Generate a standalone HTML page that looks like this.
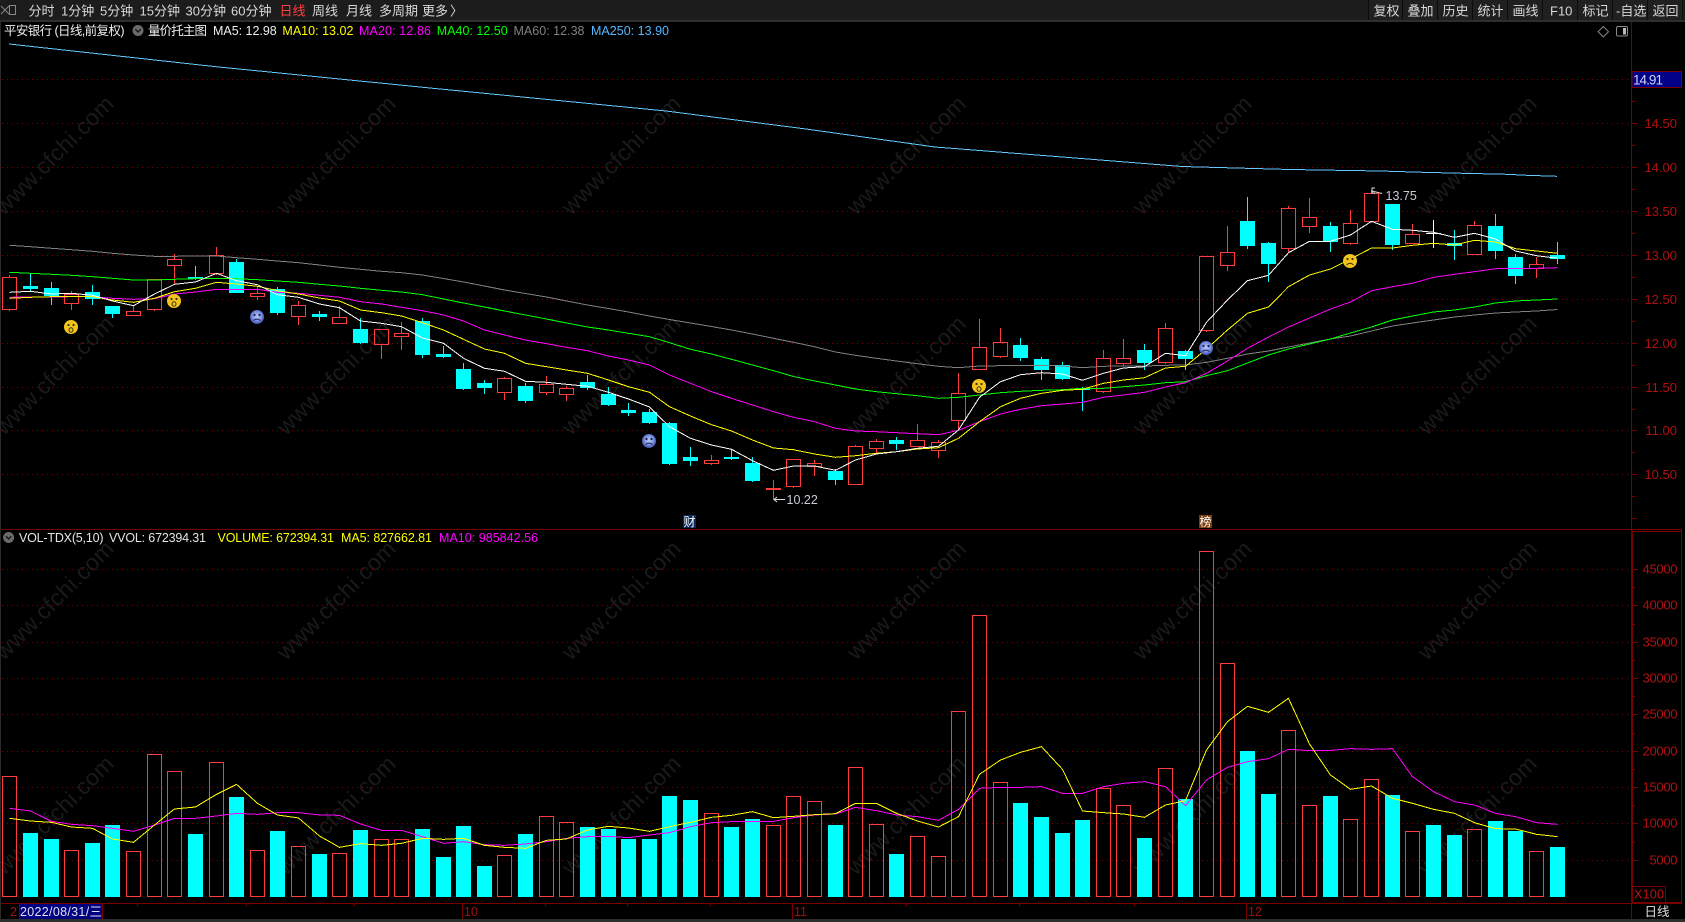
<!DOCTYPE html>
<html lang="zh-CN">
<head>
<meta charset="utf-8">
<title>平安银行 日线</title>
<style>
html,body{margin:0;padding:0;background:#000;width:1685px;height:922px;overflow:hidden}
svg{display:block}
text{font-family:"Liberation Sans","Noto Sans CJK SC",sans-serif}
.tb{font-size:13px;fill:#d8d8d8}
.ax{font-size:13px;fill:#b01010;text-anchor:end}
.wm{font-size:23px;fill:#1a1a1a;text-anchor:middle}
.info{font-size:12.5px}
.grid line{stroke:#8a0000;stroke-width:1;stroke-dasharray:1 4}
.ln{fill:none;stroke-width:1;shape-rendering:crispEdges}
.v{fill:none;stroke-width:1;vector-effect:non-scaling-stroke;shape-rendering:crispEdges}
</style>
</head>
<body>
<svg width="1685" height="922" viewBox="0 0 1685 922" xmlns="http://www.w3.org/2000/svg">
<defs>
<radialGradient id="bg" cx="50%" cy="45%" r="55%"><stop offset="0" stop-color="#b8c8f8"/><stop offset=".6" stop-color="#7a90e0"/><stop offset="1" stop-color="#3a4ea8"/></radialGradient>
<g id="ys"><circle r="7" fill="#f2c41c"/><circle cx="-2.5" cy="-2" r="1.1" fill="#3a3010"/><circle cx="2.5" cy="-2" r="1.1" fill="#3a3010"/><ellipse cy="3" rx="2" ry="2.2" fill="none" stroke="#3a3010"/></g>
<g id="yf"><circle r="7" fill="#f2c41c"/><circle cx="-2.5" cy="-2" r="1.1" fill="#3a3010"/><circle cx="2.5" cy="-2" r="1.1" fill="#3a3010"/><path d="M-3.5 4Q0 .5 3.5 4" fill="none" stroke="#3a3010"/></g>
<g id="bf"><circle r="7" fill="url(#bg)"/><circle cx="-2.5" cy="-2" r="1.1" fill="#1a2040"/><circle cx="2.5" cy="-2" r="1.1" fill="#1a2040"/><path d="M-3.5 3.5Q0 .8 3.5 3.5" fill="none" stroke="#1a2040"/></g>
</defs>

<rect width="1685" height="922" fill="#000"/>

<!-- watermark -->
<g class="wm">
<text transform="translate(54 155) rotate(-45)" dy="8" textLength="157">www.cfchi.com</text>
<text transform="translate(336 155) rotate(-45)" dy="8" textLength="157">www.cfchi.com</text>
<text transform="translate(621 155) rotate(-45)" dy="8" textLength="157">www.cfchi.com</text>
<text transform="translate(906 155) rotate(-45)" dy="8" textLength="157">www.cfchi.com</text>
<text transform="translate(1192 155) rotate(-45)" dy="8" textLength="157">www.cfchi.com</text>
<text transform="translate(1477 155) rotate(-45)" dy="8" textLength="157">www.cfchi.com</text>
<text transform="translate(54 375) rotate(-45)" dy="8" textLength="157">www.cfchi.com</text>
<text transform="translate(336 375) rotate(-45)" dy="8" textLength="157">www.cfchi.com</text>
<text transform="translate(621 375) rotate(-45)" dy="8" textLength="157">www.cfchi.com</text>
<text transform="translate(906 375) rotate(-45)" dy="8" textLength="157">www.cfchi.com</text>
<text transform="translate(1192 375) rotate(-45)" dy="8" textLength="157">www.cfchi.com</text>
<text transform="translate(1477 375) rotate(-45)" dy="8" textLength="157">www.cfchi.com</text>
<text transform="translate(54 600) rotate(-45)" dy="8" textLength="157">www.cfchi.com</text>
<text transform="translate(336 600) rotate(-45)" dy="8" textLength="157">www.cfchi.com</text>
<text transform="translate(621 600) rotate(-45)" dy="8" textLength="157">www.cfchi.com</text>
<text transform="translate(906 600) rotate(-45)" dy="8" textLength="157">www.cfchi.com</text>
<text transform="translate(1192 600) rotate(-45)" dy="8" textLength="157">www.cfchi.com</text>
<text transform="translate(1477 600) rotate(-45)" dy="8" textLength="157">www.cfchi.com</text>
<text transform="translate(54 815) rotate(-45)" dy="8" textLength="157">www.cfchi.com</text>
<text transform="translate(336 815) rotate(-45)" dy="8" textLength="157">www.cfchi.com</text>
<text transform="translate(621 815) rotate(-45)" dy="8" textLength="157">www.cfchi.com</text>
<text transform="translate(906 815) rotate(-45)" dy="8" textLength="157">www.cfchi.com</text>
<text transform="translate(1192 815) rotate(-45)" dy="8" textLength="157">www.cfchi.com</text>
<text transform="translate(1477 815) rotate(-45)" dy="8" textLength="157">www.cfchi.com</text>
</g>

<!-- grids -->
<g class="grid" shape-rendering="crispEdges">
<line x1="2" x2="1631" y1="79.5" y2="79.5"/>
<line x1="2" x2="1631" y1="123.5" y2="123.5"/>
<line x1="2" x2="1631" y1="167.5" y2="167.5"/>
<line x1="2" x2="1631" y1="211.5" y2="211.5"/>
<line x1="2" x2="1631" y1="255.5" y2="255.5"/>
<line x1="2" x2="1631" y1="299.5" y2="299.5"/>
<line x1="2" x2="1631" y1="343.5" y2="343.5"/>
<line x1="2" x2="1631" y1="387.5" y2="387.5"/>
<line x1="2" x2="1631" y1="430.5" y2="430.5"/>
<line x1="2" x2="1631" y1="474.5" y2="474.5"/>
<line x1="2" x2="1631" y1="569.5" y2="569.5"/>
<line x1="2" x2="1631" y1="605.5" y2="605.5"/>
<line x1="2" x2="1631" y1="642.5" y2="642.5"/>
<line x1="2" x2="1631" y1="678.5" y2="678.5"/>
<line x1="2" x2="1631" y1="714.5" y2="714.5"/>
<line x1="2" x2="1631" y1="751.5" y2="751.5"/>
<line x1="2" x2="1631" y1="787.5" y2="787.5"/>
<line x1="2" x2="1631" y1="823.5" y2="823.5"/>
<line x1="2" x2="1631" y1="860.5" y2="860.5"/>
</g>

<!-- candles red -->
<path shape-rendering="crispEdges" fill="none" stroke="#ff3c3c" d="
M2.5 277.5h14v32h-14zM9.5 275v2M9.5 310v1
M64.5 294.5h14v9h-14zM71.5 291v3M71.5 304v6
M126.5 311.5h14v4h-14zM133.5 306v5
M147.5 279.5h14v30h-14zM154.5 310v1
M167.5 259.5h14v6h-14zM174.5 254v5M174.5 266v18
M209.5 255.5h14v18h-14zM216.5 247v8M216.5 274v1
M250.5 293.5h14v3h-14zM257.5 286v7M257.5 297v3
M291.5 305.5h14v11h-14zM298.5 301v4M298.5 317v8
M332.5 317.5h14v6h-14zM339.5 306v11
M374.5 329.5h14v15h-14zM381.5 345v14
M394.5 333.5h14v3h-14zM401.5 322v11M401.5 337v13
M497.5 378.5h14v14h-14zM504.5 377v1M504.5 393v7
M539.5 384.5h14v8h-14zM546.5 376v8M546.5 393v2
M559.5 388.5h14v6h-14zM566.5 386v2M566.5 395v6
M704.5 460.5h14v3h-14zM711.5 455v5M711.5 464v1
M773.5 480V500
M786.5 459.5h14v27h-14zM793.5 487v1
M807.5 463.5h14v3h-14zM814.5 460v3M814.5 467v9
M848.5 446.5h14v38h-14zM855.5 445v1
M869.5 441.5h14v7h-14zM876.5 439v2M876.5 449v5
M910.5 440.5h14v6h-14zM917.5 424v16
M931.5 442.5h14v8h-14zM938.5 440v2M938.5 451v7
M951.5 393.5h14v27h-14zM958.5 373v20M958.5 421v9
M972.5 347.5h14v22h-14zM979.5 319v28
M993.5 342.5h14v14h-14zM1000.5 328v14M1000.5 357v1
M1096.5 358.5h14v33h-14zM1103.5 350v8M1103.5 392v1
M1116.5 358.5h14v5h-14zM1123.5 339v19M1123.5 364v2
M1158.5 328.5h14v34h-14zM1165.5 323v5M1165.5 363v1
M1199.5 256.5h14v74h-14zM1206.5 331v1
M1220.5 252.5h14v13h-14zM1227.5 226v26M1227.5 266v5
M1281.5 208.5h14v40h-14zM1288.5 206v2M1288.5 249v4
M1302.5 217.5h14v9h-14zM1309.5 198v19M1309.5 227v6
M1343.5 223.5h14v20h-14zM1350.5 210v13M1350.5 244v1
M1364.5 193.5h14v28h-14zM1371.5 190v3M1371.5 222v1
M1405.5 234.5h14v9h-14zM1412.5 224v10
M1467.5 225.5h14v29h-14zM1474.5 221v4
M1529.5 264.5h14v4h-14zM1536.5 257v7M1536.5 269v9"/>
<rect x="766" y="488" width="15" height="2" fill="#ff3c3c"/>

<!-- candles cyan -->
<path shape-rendering="crispEdges" fill="#0ff" d="
M23 286h15v3h-15zM44 288h15v8h-15zM85 292h15v7h-15zM105 306h15v8h-15zM188 277h15v2h-15zM229 262h15v31h-15zM270 289h15v24h-15zM312 314h15v3h-15zM353 329h15v14h-15zM415 321h15v34h-15zM436 354h15v3h-15zM456 369h15v20h-15zM477 383h15v5h-15zM518 386h15v15h-15zM580 382h15v6h-15zM601 394h15v11h-15zM621 410h15v3h-15zM642 412h15v11h-15zM662 423h15v41h-15zM683 457h15v4h-15zM724 457h15v2h-15zM745 463h15v18h-15zM828 471h15v9h-15zM889 440h15v4h-15zM1013 345h15v13h-15zM1034 359h15v11h-15zM1055 365h15v14h-15zM1075 388h15v2h-15zM1137 350h15v13h-15zM1178 351h15v8h-15zM1240 221h15v25h-15zM1261 243h15v21h-15zM1323 226h15v16h-15zM1385 204h15v41h-15zM1447 243h15v3h-15zM1488 226h15v25h-15zM1508 257h15v19h-15zM1550 255h15v4h-15z"/>
<path shape-rendering="crispEdges" fill="none" stroke="#0ff" d="
M30.5 274V291M51.5 282V305M92.5 285V305M112.5 306V318M195.5 266V280M236.5 259V293M277.5 287V315M319.5 311V321M360.5 318V344M422.5 318V358M443.5 346V358M463.5 363V390M484.5 380V394M525.5 383V403M587.5 375V390M608.5 387V406M628.5 403V416M649.5 409V424M669.5 422V465M690.5 447V466M731.5 450V460M752.5 457V482M835.5 469V485M896.5 437V450M1020.5 338V361M1041.5 357V380M1062.5 362V380M1082.5 387V411M1144.5 344V370M1185.5 350V370M1247.5 197V249M1268.5 242V282M1330.5 222V252M1392.5 204V250M1454.5 230V260M1495.5 214V259M1515.5 254V284M1557.5 242V264"/>
<path shape-rendering="crispEdges" fill="none" stroke="#fff" d="M1426 233.5H1441M1433.5 220V248"/>

<!-- price MAs -->
<polyline class="ln" stroke="#64c8ff" points="9,44 215,66.6 430,88 666,111 806,129 935,147 1075,158 1182,166.5 1290,169.5 1380,171 1423,172.3 1463,173.3 1507,174.3 1527,175.3 1557,176.3"/>
<polyline class="ln" stroke="#808080" points="9.5,245.3 30.5,246.7 51.5,248.3 71.5,249.7 92.5,251.3 112.5,253.3 133.5,255 154.5,256.3 174.5,256.3 195.5,256 216.5,256 236.5,257.7 257.5,259.3 277.5,261 298.5,262.7 319.5,265 339.5,267.3 360.5,269.3 381.5,271.3 401.5,272.7 422.5,275 443.5,278.5 463.5,282 484.5,286 504.5,290 525.5,293.5 546.5,297 566.5,301 587.5,305 608.5,308.5 628.5,312 649.5,316 669.5,319.5 690.5,323 711.5,326.5 731.5,330 752.5,334 773.5,338.3 793.5,342.3 814.5,346.7 835.5,352 855.5,355.3 876.5,358.3 896.5,361 917.5,363.7 938.5,366.3 958.5,367.7 979.5,366 1000.5,365.7 1020.5,365.3 1041.5,365.3 1062.5,366 1082.5,367.7 1103.5,366.3 1123.5,366 1144.5,366 1165.5,365.3 1185.5,365 1206.5,362.3 1227.5,358.3 1247.5,354 1268.5,351 1288.5,347 1309.5,343 1330.5,339 1350.5,336 1371.5,331 1392.5,326 1412.5,323 1433.5,320 1454.5,317 1474.5,315 1495.5,313 1515.5,312 1536.5,311 1557.5,309.5"/>
<polyline class="ln" stroke="#0f0" points="9.5,272.3 30.5,273.3 51.5,274.3 71.5,275.3 92.5,276.7 112.5,278.3 133.5,280 154.5,280 174.5,279.3 195.5,278.7 216.5,278.3 236.5,278.7 257.5,279.7 277.5,281 298.5,282.3 319.5,284.3 339.5,286 360.5,288.3 381.5,290.3 401.5,292 422.5,294.7 443.5,299 463.5,303 484.5,307 504.5,311 525.5,315 546.5,319 566.5,323 587.5,327 608.5,330 628.5,333.3 649.5,336.7 669.5,342.7 690.5,349.3 711.5,354 731.5,359.3 752.5,365 773.5,370.7 793.5,376.5 814.5,381 835.5,385 855.5,389 876.5,391.7 896.5,393.7 917.5,395.7 938.5,398.3 958.5,397.3 979.5,395 1000.5,392.7 1020.5,391.3 1041.5,390.3 1062.5,389.7 1082.5,388.3 1103.5,388.3 1123.5,386.7 1144.5,385 1165.5,382.7 1185.5,381.7 1206.5,375.7 1227.5,370.7 1247.5,363 1268.5,355 1288.5,349 1309.5,344 1330.5,339 1350.5,333 1371.5,327 1392.5,320 1412.5,316 1433.5,312 1454.5,310 1474.5,307 1495.5,303 1515.5,301 1536.5,300 1557.5,299"/>
<polyline class="ln" stroke="#f0f" points="9.5,297.3 30.5,297 51.5,297 71.5,296.7 92.5,296.7 112.5,298.3 133.5,299.3 154.5,298.7 174.5,294 195.5,292 216.5,289.3 236.5,289.3 257.5,289.3 277.5,292.3 298.5,293.3 319.5,295.3 339.5,297.3 360.5,301.7 381.5,304 401.5,307.3 422.5,310.7 443.5,315 463.5,321 484.5,330 504.5,335 525.5,340 546.5,343.7 566.5,347.3 587.5,350.7 608.5,356 628.5,360 649.5,365 669.5,375 690.5,383.3 711.5,391.7 731.5,398.3 752.5,405 773.5,411.7 793.5,417.3 814.5,421.7 835.5,428.3 855.5,431 876.5,431.7 896.5,432.7 917.5,433.7 938.5,434.7 958.5,430.3 979.5,421.7 1000.5,414 1020.5,409.3 1041.5,405.7 1062.5,404 1082.5,402.3 1103.5,397.3 1123.5,395 1144.5,392.3 1165.5,387 1185.5,382.7 1206.5,373.3 1227.5,361 1247.5,348.3 1268.5,337 1288.5,327 1309.5,318 1330.5,309 1350.5,302 1371.5,290.7 1392.5,286.7 1412.5,283.3 1433.5,277.3 1454.5,274.3 1474.5,271.7 1495.5,268.7 1515.5,268.3 1536.5,268.3 1557.5,267.7"/>
<polyline class="ln" stroke="#ff0" points="9.5,298.3 30.5,297.3 51.5,296.7 71.5,296.3 92.5,296.7 112.5,300 133.5,302.3 154.5,298.3 174.5,291.7 195.5,288.3 216.5,282.3 236.5,284 257.5,286.3 277.5,290.7 298.5,294 319.5,298 339.5,301 360.5,310 381.5,312.7 401.5,316 422.5,322.7 443.5,330 463.5,339.3 484.5,349 504.5,353.3 525.5,363.3 546.5,366.7 566.5,370 587.5,373.3 608.5,380 628.5,386.7 649.5,392.3 669.5,406.7 690.5,416 711.5,424.7 731.5,431 752.5,440 773.5,448 793.5,449.7 814.5,454 835.5,457.3 855.5,455.7 876.5,453.3 896.5,451.7 917.5,449 938.5,447.7 958.5,438.3 979.5,421.7 1000.5,406.7 1020.5,398.3 1041.5,393.3 1062.5,390.3 1082.5,389.3 1103.5,383.3 1123.5,380 1144.5,377.7 1165.5,368 1185.5,366.3 1206.5,349 1227.5,330 1247.5,313.3 1268.5,307 1288.5,286.7 1309.5,275 1330.5,269 1350.5,259 1371.5,248 1392.5,248 1412.5,245.3 1433.5,243.3 1454.5,245 1474.5,240.3 1495.5,242 1515.5,248.7 1536.5,251 1557.5,253.3"/>
<polyline class="ln" stroke="#fff" points="9.5,292.3 30.5,291.3 51.5,294 71.5,293.3 92.5,295.3 112.5,301 133.5,305.7 154.5,294 174.5,284.3 195.5,282 216.5,273.3 236.5,280.7 257.5,284.7 277.5,294.7 298.5,297.3 319.5,304 339.5,307.7 360.5,321 381.5,323.3 401.5,326.7 422.5,338 443.5,343.3 463.5,358.3 484.5,368.3 504.5,371.3 525.5,381.3 546.5,382.3 566.5,384.3 587.5,386.3 608.5,392.3 628.5,399 649.5,407 669.5,426.7 690.5,438.3 711.5,445 731.5,449.3 752.5,460.7 773.5,470.3 793.5,466 814.5,466 835.5,470.3 855.5,460 876.5,454 896.5,451.7 917.5,448.3 938.5,446.3 958.5,430 979.5,397.3 1000.5,381.7 1020.5,374.7 1041.5,372.7 1062.5,374 1082.5,380.3 1103.5,373.3 1123.5,368 1144.5,366.7 1165.5,353.3 1185.5,355.7 1206.5,322.3 1227.5,300 1247.5,280.7 1268.5,275.3 1288.5,252.7 1309.5,241.3 1330.5,241.3 1350.5,235 1371.5,221.3 1392.5,229.3 1412.5,230.3 1433.5,232.3 1454.5,237.3 1474.5,233.3 1495.5,239 1515.5,251 1536.5,255.7 1557.5,258.3"/>

<!-- faces -->
<use href="#ys" x="71" y="327"/>
<use href="#ys" x="174" y="301"/>
<use href="#bf" x="257" y="317"/>
<use href="#bf" x="649" y="441"/>
<use href="#ys" x="979" y="386"/>
<use href="#bf" x="1206" y="348"/>
<use href="#yf" x="1350" y="261"/>

<!-- high/low labels -->
<path d="M785 499.5H774M777 497l-3 2.5 3 2.5" fill="none" stroke="#ddd"/>
<text x="786.5" y="504" font-size="12.5" fill="#c8ccd4">10.22</text>
<path d="M1382 193.5L1372 191M1375 188h-3v5h3" fill="none" stroke="#ddd"/>
<text x="1385.5" y="200" font-size="12.5" fill="#c8ccd4">13.75</text>

<!-- markers -->
<rect x="683" y="515" width="13" height="13" fill="#0c2a58"/>
<text x="683.5" y="526" font-size="12" fill="#fff">财</text>
<rect x="1199" y="515" width="13" height="13" fill="#7a3c0c"/>
<text x="1199.5" y="526" font-size="12" fill="#fff">榜</text>

<!-- volume red -->
<path shape-rendering="crispEdges" fill="none" stroke="#ff3c3c" d="
M2.5 776.5h14V896.5h-14z
M64.5 850.5h14V896.5h-14z
M126.5 851.5h14V896.5h-14z
M147.5 754.5h14V896.5h-14z
M167.5 771.5h14V896.5h-14z
M209.5 762.5h14V896.5h-14z
M250.5 850.5h14V896.5h-14z
M291.5 846.5h14V896.5h-14z
M332.5 853.5h14V896.5h-14z
M374.5 839.5h14V896.5h-14z
M394.5 839.5h14V896.5h-14z
M497.5 855.5h14V896.5h-14z
M539.5 816.5h14V896.5h-14z
M559.5 822.5h14V896.5h-14z
M704.5 813.5h14V896.5h-14z
M766.5 825.5h14V896.5h-14z
M786.5 796.5h14V896.5h-14z
M807.5 801.5h14V896.5h-14z
M848.5 767.5h14V896.5h-14z
M869.5 824.5h14V896.5h-14z
M910.5 836.5h14V896.5h-14z
M931.5 856.5h14V896.5h-14z
M951.5 711.5h14V896.5h-14z
M972.5 615.5h14V896.5h-14z
M993.5 782.5h14V896.5h-14z
M1096.5 788.5h14V896.5h-14z
M1116.5 805.5h14V896.5h-14z
M1158.5 768.5h14V896.5h-14z
M1199.5 551.5h14V896.5h-14z
M1220.5 663.5h14V896.5h-14z
M1281.5 730.5h14V896.5h-14z
M1302.5 805.5h14V896.5h-14z
M1343.5 819.5h14V896.5h-14z
M1364.5 779.5h14V896.5h-14z
M1405.5 831.5h14V896.5h-14z
M1467.5 829.5h14V896.5h-14z
M1529.5 851.5h14V896.5h-14z"/>
<!-- volume cyan -->
<path shape-rendering="crispEdges" fill="#0ff" d="
M23 833h15V897h-15zM44 839h15V897h-15zM85 843h15V897h-15zM105 825h15V897h-15zM188 834h15V897h-15zM229 797h15V897h-15zM270 831h15V897h-15zM312 854h15V897h-15zM353 830h15V897h-15zM415 829h15V897h-15zM436 857h15V897h-15zM456 826h15V897h-15zM477 866h15V897h-15zM518 834h15V897h-15zM580 827h15V897h-15zM601 829h15V897h-15zM621 839h15V897h-15zM642 839h15V897h-15zM662 796h15V897h-15zM683 800h15V897h-15zM724 827h15V897h-15zM745 819h15V897h-15zM828 825h15V897h-15zM889 854h15V897h-15zM1013 803h15V897h-15zM1034 817h15V897h-15zM1055 833h15V897h-15zM1075 820h15V897h-15zM1137 838h15V897h-15zM1178 799h15V897h-15zM1240 751h15V897h-15zM1261 794h15V897h-15zM1323 796h15V897h-15zM1385 795h15V897h-15zM1426 825h15V897h-15zM1447 835h15V897h-15zM1488 821h15V897h-15zM1508 831h15V897h-15zM1550 847h15V897h-15z"/>

<!-- volume MAs -->
<polyline class="v" stroke="#f0f" transform="translate(0 520) scale(1 .33333)" points="9.5,865 30.5,873 51.5,904 71.5,913 92.5,917 112.5,925 133.5,934 154.5,915 174.5,895 195.5,895 216.5,888 236.5,880 257.5,883 277.5,878 298.5,878 319.5,885 339.5,886 360.5,912 381.5,931 401.5,931 422.5,950 443.5,970 463.5,965 484.5,974 504.5,976 525.5,972 546.5,965 566.5,955 587.5,950 608.5,949 628.5,953 649.5,945 669.5,938 690.5,920 711.5,908 731.5,905 752.5,904 773.5,904 793.5,893 814.5,885 835.5,882 855.5,862 876.5,872 896.5,885 917.5,890 938.5,901 958.5,868 979.5,805 1000.5,802 1020.5,802 1041.5,800 1062.5,820 1082.5,820 1103.5,800 1123.5,790 1144.5,785 1165.5,800 1185.5,857 1206.5,780 1227.5,742 1247.5,725 1268.5,716 1288.5,688 1309.5,692 1330.5,691 1350.5,686 1371.5,688 1392.5,686 1412.5,770 1433.5,815 1454.5,845 1474.5,855 1495.5,880 1515.5,890 1536.5,908 1557.5,913"/>
<polyline class="v" stroke="#ff0" transform="translate(0 520) scale(1 .33333)" points="9.5,895 30.5,903 51.5,907 71.5,921 92.5,925 112.5,957 133.5,967 154.5,915 174.5,867 195.5,861 216.5,823 236.5,793 257.5,850 277.5,885 298.5,894 319.5,948 339.5,982 360.5,971 381.5,976 401.5,970 422.5,955 443.5,958 463.5,955 484.5,976 504.5,982 525.5,985 546.5,961 566.5,957 587.5,930 608.5,919 628.5,924 649.5,934 669.5,920 690.5,907 711.5,892 731.5,886 752.5,875 773.5,893 793.5,889 814.5,884 835.5,881 855.5,850 876.5,850 896.5,880 917.5,903 938.5,921 958.5,890 979.5,763 1000.5,720 1020.5,697 1041.5,680 1062.5,748 1082.5,873 1103.5,878 1123.5,882 1144.5,892 1165.5,855 1185.5,842 1206.5,690 1227.5,605 1247.5,559 1268.5,577 1288.5,535 1309.5,672 1330.5,765 1350.5,808 1371.5,798 1392.5,835 1412.5,850 1433.5,868 1454.5,880 1474.5,908 1495.5,926 1515.5,927 1536.5,943 1557.5,950"/>

<!-- panel frame -->
<g shape-rendering="crispEdges" stroke="#7a0000" fill="none">
<path d="M0 529.5H1682"/>
<path d="M1631.5 22V919"/>
<path d="M0 903.5H1682"/>
<path d="M1632.5 530V903M1681.5 530V903M1632 531.5H1682M1632 902.5H1682"/>
<path d="M1632.5 886.5H1665.5V902"/>
<path d="M1632 101.5h3M1632 123.5h5M1632 145.5h3M1632 167.5h5M1632 189.5h3M1632 211.5h5M1632 233.5h3M1632 255.5h5M1632 277.5h3M1632 299.5h5M1632 321.5h3M1632 343.5h5M1632 365.5h3M1632 387.5h5M1632 409.5h3M1632 430.5h5M1632 452.5h3M1632 474.5h5M1632 496.5h3M1632 518.5h5"/>
<path d="M1633 569.5h5M1633 587.5h2M1633 605.5h5M1633 624.5h2M1633 642.5h5M1633 660.5h2M1633 678.5h5M1633 696.5h2M1633 714.5h5M1633 733.5h2M1633 751.5h5M1633 769.5h2M1633 787.5h5M1633 805.5h2M1633 823.5h5M1633 842.5h2M1633 860.5h5"/>
<path d="M137.5 903v3M246.5 903v3M354.5 903v3M545.5 903v3M627.5 903v3M710.5 903v3M906.5 903v3M1019.5 903v3M1134.5 903v3"/>
<path d="M462.5 903V919M792.5 903V919M1246.5 903V919"/>
</g>

<!-- axis labels -->
<g class="ax">
<text x="1677" y="128">14.50</text>
<text x="1677" y="172">14.00</text>
<text x="1677" y="216">13.50</text>
<text x="1677" y="260">13.00</text>
<text x="1677" y="304">12.50</text>
<text x="1677" y="348">12.00</text>
<text x="1677" y="392">11.50</text>
<text x="1677" y="435">11.00</text>
<text x="1677" y="479">10.50</text>
<text x="1677.5" y="573.5" textLength="35">45000</text>
<text x="1677.5" y="609.5" textLength="35">40000</text>
<text x="1677.5" y="646.5" textLength="35">35000</text>
<text x="1677.5" y="682.5" textLength="35">30000</text>
<text x="1677.5" y="718.5" textLength="35">25000</text>
<text x="1677.5" y="755.5" textLength="35">20000</text>
<text x="1677.5" y="791.5" textLength="35">15000</text>
<text x="1677.5" y="827.5" textLength="35">10000</text>
<text x="1677.5" y="864.5" textLength="28">5000</text>
</g>
<text x="1634" y="898.5" font-size="12.5" fill="#c01010" textLength="30">X100</text>

<!-- current price box -->
<rect x="1632" y="71.5" width="49.5" height="16" fill="#000088" stroke="#7a0000" shape-rendering="crispEdges"/>
<text x="1633" y="84.5" font-size="13.5" fill="#d0d4f0" textLength="30">14.91</text>

<!-- diamond and panel icon -->
<path d="M1603.3 26.5l5.2 5.2-5.2 5.2-5.2-5.2z" fill="none" stroke="#888"/>
<rect x="1616.5" y="26.5" width="11" height="9.5" rx="1.5" fill="none" stroke="#888"/>
<rect x="1623" y="28" width="3" height="6.5" fill="#bbb"/>

<!-- top toolbar -->
<rect x="0" y="0" width="1685" height="20" fill="#1c1c1c"/>
<rect x="0" y="20" width="1685" height="2" fill="#2e2e2e"/>
<rect x="1368" y="0" width="315" height="20" fill="#0c0c0c"/>
<g fill="#202020" shape-rendering="crispEdges">
<rect x="1369" y="0" width="33" height="20"/><rect x="1403" y="0" width="34" height="20"/><rect x="1438" y="0" width="34" height="20"/><rect x="1473" y="0" width="34" height="20"/><rect x="1508" y="0" width="34" height="20"/><rect x="1543" y="0" width="34" height="20"/><rect x="1578" y="0" width="34" height="20"/><rect x="1613" y="0" width="34" height="20"/><rect x="1648" y="0" width="34" height="20"/>
</g>
<path d="M1 6l4 4-4 4M9 6l-4 4 4 4" fill="none" stroke="#888"/>
<rect x="9.5" y="5.5" width="6" height="9" fill="none" stroke="#888"/>
<g class="tb">
<text x="28.5" y="15.5">分时</text>
<text x="61" y="15.5">1分钟</text>
<text x="100" y="15.5">5分钟</text>
<text x="139.5" y="15.5">15分钟</text>
<text x="185.5" y="15.5">30分钟</text>
<text x="231" y="15.5">60分钟</text>
<text x="279.5" y="15.5" style="fill:#ff4040">日线</text>
<text x="312" y="15.5">周线</text>
<text x="346" y="15.5">月线</text>
<text x="379" y="15.5">多周期</text>
<text x="422" y="15.5">更多</text>
<text x="450" y="15.5">〉</text>
<text x="1373.5" y="15.5">复权</text>
<text x="1407.5" y="15.5">叠加</text>
<text x="1442.5" y="15.5">历史</text>
<text x="1477.5" y="15.5">统计</text>
<text x="1512.5" y="15.5">画线</text>
<text x="1550" y="15.5">F10</text>
<text x="1582.5" y="15.5">标记</text>
<text x="1616" y="15.5">-自选</text>
<text x="1652.5" y="15.5">返回</text>
</g>

<!-- info row 1 -->
<g class="info">
<text x="4" y="35" fill="#eee" textLength="120.5">平安银行 (日线,前复权)</text>
<circle cx="138" cy="30.5" r="5.5" fill="#6a6a6a"/>
<path d="M135.3 29.3l2.7 2.7 2.7-2.7" fill="none" stroke="#111" stroke-width="1.3"/>
<text x="148" y="35" fill="#eee" textLength="59">量价托主图</text>
<text x="213" y="35" fill="#eee" textLength="63.7">MA5: 12.98</text>
<text x="282.4" y="35" fill="#ff0" textLength="71">MA10: 13.02</text>
<text x="359" y="35" fill="#f0f" textLength="72">MA20: 12.86</text>
<text x="436.7" y="35" fill="#0f0" textLength="71">MA40: 12.50</text>
<text x="513.5" y="35" fill="#808080" textLength="71">MA60: 12.38</text>
<text x="591" y="35" fill="#55b8ff" textLength="78">MA250: 13.90</text>
</g>

<!-- info row 2 -->
<circle cx="8.6" cy="537.5" r="5.5" fill="#6a6a6a"/>
<path d="M6 536.3l2.6 2.6 2.6-2.6" fill="none" stroke="#111" stroke-width="1.3"/>
<g class="info">
<text x="19" y="542" fill="#e4e4e4" textLength="84.5">VOL-TDX(5,10)</text>
<text x="109" y="542" fill="#e4e4e4" textLength="97">VVOL: 672394.31</text>
<text x="217.5" y="542" fill="#ff0" textLength="116.5">VOLUME: 672394.31</text>
<text x="341" y="542" fill="#ff0" textLength="91">MA5: 827662.81</text>
<text x="439" y="542" fill="#f0f" textLength="99">MA10: 985842.56</text>
</g>

<!-- bottom axis -->
<text x="10" y="916" font-size="12.5" fill="#b01010">2</text>
<rect x="19" y="904" width="83.5" height="15" fill="#000080"/>
<path d="M19.5 904V919M102.5 904V919" stroke="#7a0000" shape-rendering="crispEdges"/>
<text x="20" y="916" font-size="12.5" fill="#e0e0f0" textLength="82">2022/08/31/三</text>
<text x="464" y="916" font-size="12.5" fill="#a01010">10</text>
<text x="794" y="916" font-size="12.5" fill="#a01010">11</text>
<text x="1248" y="916" font-size="12.5" fill="#a01010">12</text>
<text x="1644.5" y="916" font-size="12.5" fill="#e0e0e0">日线</text>

<!-- edges -->
<rect x="0" y="22" width="1" height="897" fill="#2a2a2a"/>
<rect x="0" y="919" width="1685" height="3" fill="#2e2e2e"/>
</svg>
</body>
</html>
